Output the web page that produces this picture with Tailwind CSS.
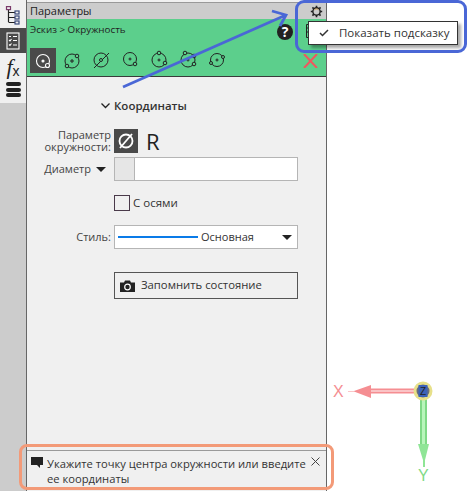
<!DOCTYPE html>
<html lang="ru">
<head>
    <meta charset="UTF-8">
    <title>Параметры</title>
    <script src="https://cdn.jsdelivr.net/npm/@tailwindcss/browser@4"></script>
</head>
<body class="bg-white">
<div class="relative w-[470px] h-[491px] overflow-hidden flex font-['Open_Sans','Noto_Sans',sans-serif] text-[#333]">

    <!-- left tabs -->
    <div class="w-[27px] shrink-0 h-full bg-[#cccccc] border-r border-[#666] flex flex-col">
        <div class="h-[103px] bg-[#f0f0f0] pt-[3px] flex flex-col items-center">
            <div class="h-[25px] w-full flex items-center justify-center">
                <svg width="16" height="20" viewBox="0 0 16 20" fill="none" stroke="#222" stroke-width="1.200"><path d="M3.500 2v14M3.500 6.500h7M3.500 11.500h7M3.500 16.500h7"/><rect x="1.500" y="0.600" width="4" height="3" stroke="#7a3a6a" fill="#f0f0f0"/><rect x="10" y="5" width="4" height="3" stroke="#3a4a7a" fill="#f0f0f0"/><rect x="10" y="10" width="4" height="3" stroke="#3a4a7a" fill="#f0f0f0"/><rect x="10" y="15" width="4" height="3" stroke="#3a4a7a" fill="#f0f0f0"/></svg>
            </div>
            <div class="h-[25px] w-full bg-[#4a4a4a] flex items-center justify-center">
                <svg width="14" height="18" viewBox="0 0 14 18" fill="none" stroke="#fff" stroke-width="1.100"><rect x="1" y="1" width="12" height="16"/><path d="M3 4.500h2M7 4.500h4M3 8l1 1 1.500-2M7 8.500h4M3 12.500l1 1 1.500-2M7 13h4"/></svg>
            </div>
            <div class="h-[27px] w-full flex items-center justify-center font-['Liberation_Serif',serif] italic text-[#222] text-[22px] leading-none">f<span class="text-[14px] not-italic font-['Liberation_Sans',sans-serif] mt-[8px]">x</span></div>
            <div class="mt-[2px] w-[15px] flex flex-col gap-[1.500px]">
                <div class="h-[4px] rounded-[2px] bg-[#222]"></div>
                <div class="h-[4px] rounded-[2px] bg-[#222]"></div>
                <div class="h-[4px] rounded-[2px] bg-[#222]"></div>
            </div>
        </div>
    </div>

    <!-- panel -->
    <div class="w-[300px] shrink-0 h-full bg-[#f0f0f0] border-r border-[#666] flex flex-col">
        <div class="h-[17px] shrink-0 mt-[2px] bg-[#cccccc] border-t border-[#999] flex items-center justify-between pl-[3px] pr-[3px] text-[11px] text-[#222]">
            <span>Параметры</span>
            <svg width="13" height="13" viewBox="0 0 16 16" fill="none"><path d="M8 1v3M8 12v3M1 8h3M12 8h3M3 3l2.200 2.200M10.800 10.800L13 13M3 13l2.200-2.200M10.800 5.200L13 3" stroke="#222" stroke-width="2"/><circle cx="8" cy="8" r="4.500" stroke="#222" stroke-width="1.800" fill="#ccc"/><path d="M5.500 6a3.200 3.200 0 0 1 5 0" stroke="#c98a2b"/></svg>
        </div>
        <div class="h-[58px] shrink-0 bg-[#5ccf8c] border-b border-[#3a3a3a] relative">
            <div class="pl-[3px] pt-[4px] text-[9.800px] leading-[14px] text-[#222]">Эскиз &gt; Окружность</div>
            <div class="absolute left-[3px] top-[29px] flex items-center gap-[3px]">
                <div class="w-[26px] h-[25px] bg-[#4a4a4a] flex items-center justify-center">
                    <svg width="18" height="18" viewBox="0 0 18 18" fill="none" stroke="#fff" stroke-width="1.100"><circle cx="9" cy="9" r="6.500"/><circle cx="9" cy="9" r="1" fill="#fff"/><circle cx="13.500" cy="13.500" r="2" fill="#4a4a4a"/></svg>
                </div>
                <svg class="w-[26px] h-[25px]" viewBox="0 0 26 25" fill="none" stroke="#222"><circle cx="13" cy="13" r="7"/><path d="M11 13h4M13 11v4"/><circle cx="18" cy="8" r="1.800" fill="#5ccf8c"/><circle cx="8" cy="18" r="1.800" fill="#5ccf8c"/></svg>
                <svg class="w-[26px] h-[25px]" viewBox="0 0 26 25" fill="none" stroke="#222"><circle cx="13" cy="12" r="7"/><path d="M6 20L21 5"/><circle cx="13" cy="12" r="1.500" fill="#5ccf8c"/></svg>
                <svg class="w-[26px] h-[25px]" viewBox="0 0 26 25" fill="none" stroke="#222"><circle cx="13" cy="11" r="6.500"/><path d="M11.500 11h3M13 9.500v3"/><circle cx="18" cy="16" r="1.800" fill="#5ccf8c"/></svg>
                <svg class="w-[26px] h-[25px]" viewBox="0 0 26 25" fill="none" stroke="#222"><circle cx="13" cy="12" r="7"/><path d="M11.500 12h3M13 10.500v3"/><circle cx="13" cy="5" r="1.800" fill="#5ccf8c"/><circle cx="19" cy="15" r="1.800" fill="#5ccf8c"/></svg>
                <svg class="w-[26px] h-[25px]" viewBox="0 0 26 25" fill="none" stroke="#222"><circle cx="13" cy="12" r="7"/><path d="M11.500 12h3M13 10.500v3"/><circle cx="10" cy="5" r="1.800" fill="#5ccf8c"/><circle cx="19" cy="8" r="1.800" fill="#5ccf8c"/><circle cx="19" cy="16" r="1.800" fill="#5ccf8c"/></svg>
                <svg class="w-[26px] h-[25px]" viewBox="0 0 26 25" fill="none" stroke="#222"><circle cx="13" cy="12" r="6.500"/><path d="M11.500 12h3M13 10.500v3"/><circle cx="19" cy="9" r="1.500" fill="#5ccf8c"/><circle cx="7" cy="15" r="1.500" fill="#5ccf8c"/></svg>
            </div>
            <div class="absolute left-[250px] top-[5px] w-[16px] h-[16px] rounded-full bg-[#222] text-white text-[14px] font-bold leading-[16px] text-center">?</div>
            <svg class="absolute left-[279px] top-[4px]" width="6" height="15" viewBox="0 0 6 15" fill="none" stroke="#222"><path d="M.5 1.500h5v13h-5zM.5 5h5M.5 9h5"/></svg>
            <svg class="absolute left-[276px] top-[35px]" width="15" height="14" viewBox="0 0 15 14" stroke="#f0575f" stroke-width="2"><path d="M1 0l13 14M14 0L1 14"/></svg>
        </div>

        <div class="flex-1 flex flex-col">
            <div class="mt-[21px] h-[16px] flex items-center pl-[74px] text-[11.500px] font-semibold text-[#333]">
                <svg class="mr-[4px]" width="9" height="6" viewBox="0 0 9 6" fill="none" stroke="#222" stroke-width="1.300"><path d="M0.500 0.500l4 4 4-4"/></svg>
                Координаты
            </div>
            <div class="mt-[15px] flex items-center h-[24px]">
                <div class="w-[84px] text-right text-[11px] leading-[12px] text-[#444]">Параметр<br>окружности:</div>
                <div class="ml-[3px] w-[24px] h-[24px] bg-[#4a4a4a] flex items-center justify-center">
                    <svg width="20" height="20" viewBox="0 0 20 20" fill="none" stroke="#fff" stroke-width="1.800"><circle cx="10" cy="10" r="6.500"/><path d="M4 17L16 3"/></svg>
                </div>
                <span class="ml-[8px] text-[22px] leading-none text-[#222]">R</span>
            </div>
            <div class="mt-[4px] flex items-center h-[24px]">
                <div class="w-[84px] flex items-center justify-end pr-[5px] text-[11px] text-[#444]">Диаметр
                    <span class="ml-[5px] w-0 h-0 border-l-[5px] border-r-[5px] border-t-[5px] border-l-transparent border-r-transparent border-t-[#222]"></span>
                </div>
                <div class="ml-[3px] w-[184px] h-[24px] bg-white border border-[#b5b5b5] flex">
                    <div class="w-[20px] bg-[#e6e6e6] border-r border-[#b5b5b5]"></div>
                </div>
            </div>
            <div class="mt-[14px] flex items-center pl-[87px] h-[16px]">
                <div class="w-[16px] h-[16px] border border-[#4a3a4a] bg-[#f0f0f0]"></div>
                <span class="ml-[3px] text-[11.500px] text-[#333]">С осями</span>
            </div>
            <div class="mt-[14px] flex items-center h-[24px]">
                <div class="w-[84px] text-right text-[11px] text-[#444]">Стиль:</div>
                <div class="ml-[3px] w-[184px] h-[24px] bg-white border border-[#b5b5b5] flex items-center pl-[3px] pr-[5px]">
                    <div class="w-[80px] h-[2px] bg-[#0a7be8]"></div>
                    <span class="ml-[3px] text-[11px] text-[#333]">Основная</span>
                    <span class="ml-auto w-0 h-0 border-l-[5px] border-r-[5px] border-t-[5px] border-l-transparent border-r-transparent border-t-[#222]"></span>
                </div>
            </div>
            <div class="mt-[23px] ml-[87px] w-[184px] h-[27px] border border-[#555] flex items-center pl-[5px] text-[11.300px] text-[#333]">
                <svg width="15" height="12" viewBox="0 0 15 12"><path d="M0 2.500h4L5 .5h5l1 2h4V12H0z" fill="#222"/><circle cx="7.500" cy="7" r="2.800" fill="#222" stroke="#fff" stroke-width="1.200"/></svg>
                <span class="ml-[6px]">Запомнить состояние</span>
            </div>
            <div class="mt-auto h-[41px] border-t border-[#9a9a9a] relative text-[11.200px] leading-[15px] text-[#333] pl-[20px] pt-[5px]">
                <svg class="absolute left-[4px] top-[6px]" width="12" height="11" viewBox="0 0 12 11" fill="#222"><path d="M0 0h12v8H9v3L6 8H0z"/></svg>
                <p class="w-[270px]">Укажите точку центра окружности или введите ее координаты</p>
                <svg class="absolute left-[284px] top-[6px]" width="9" height="9" viewBox="0 0 9 9" stroke="#444" fill="none"><path d="M.5.500l8 8M8.500.500l-8 8"/></svg>
            </div>
        </div>
    </div>

    <!-- context menu -->
    <div class="absolute left-[308px] top-[21px] w-[150px] h-[24px] bg-white border border-[#333] shadow-[3px_3px_3px_rgba(0,0,0,0.35)] flex items-center text-[11.500px] text-[#333] pl-[10px]">
        <svg width="10" height="8" viewBox="0 0 10 8" fill="none" stroke="#333" stroke-width="1.500"><path d="M1 4l2.500 2.500L9 1"/></svg>
        <span class="ml-[10px]">Показать подсказку</span>
    </div>

    <!-- callouts and arrow -->
    <div class="absolute left-[295px] top-[0px] w-[172px] h-[53px] rounded-[9px] border-[3px] border-[#4a67d6]"></div>
    <div class="absolute left-[19px] top-[444px] w-[315px] h-[46px] rounded-[8px] border-[3px] border-[#f39a78]"></div>
    <svg class="absolute left-0 top-0 pointer-events-none" width="470" height="491" fill="none" stroke="#4a67d6" stroke-width="2.800"><path d="M123 87L286 15M272 11l14 4-6 11"/></svg>

    <!-- axes -->
    <svg class="absolute left-[320px] top-[370px]" width="130" height="121" viewBox="0 0 130 121" fill="none">
        <path d="M48 21H95" stroke="#f58e92" stroke-width="5"/>
        <path d="M50 21H95" stroke="#fbd5d6" stroke-width="1.500"/>
        <path d="M28 21h6l17-6v13l-17-6.500h-6z" fill="#f58e92"/>
        <path d="M103.500 28V75" stroke="#7fd986" stroke-width="7"/>
        <path d="M103.500 28V75" stroke="#b8f5bb" stroke-width="3"/>
        <path d="M98 74h11l-4 16v7h-2v-7z" fill="#8fe596"/>
        <circle cx="103" cy="21" r="8" fill="#6b6f78" stroke="#e7e08a" stroke-width="3"/>
        <rect x="98.500" y="15" width="9" height="12" fill="#3c62b8"/>
        <text x="103" y="25" text-anchor="middle" font-size="10" fill="#222" font-family="Liberation Sans">Z</text>
    </svg>
    <span class="absolute left-[333px] top-[384px] text-[16px] leading-none text-[#f58e92] font-['Liberation_Sans',sans-serif]">X</span>
    <span class="absolute left-[418px] top-[468px] text-[16px] leading-none text-[#7fd986] font-['Liberation_Sans',sans-serif]">Y</span>
</div>
</body>
</html>
